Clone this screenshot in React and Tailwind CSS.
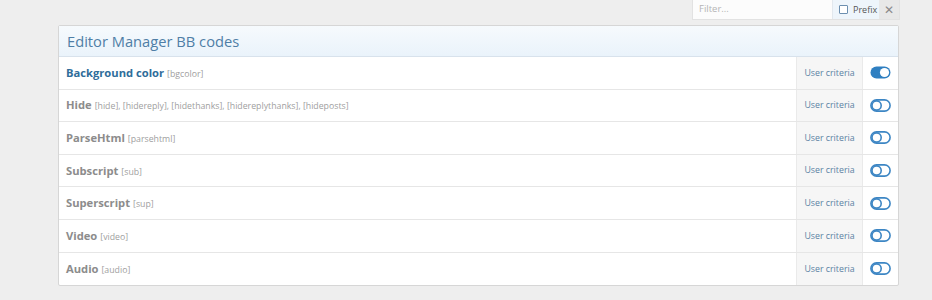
import React from "react";

const rows = [
  { name: "Background color", tags: "[bgcolor]", on: true },
  { name: "Hide", tags: "[hide], [hidereply], [hidethanks], [hidereplythanks], [hideposts]", on: false },
  { name: "ParseHtml", tags: "[parsehtml]", on: false },
  { name: "Subscript", tags: "[sub]", on: false },
  { name: "Superscript", tags: "[sup]", on: false },
  { name: "Video", tags: "[video]", on: false },
  { name: "Audio", tags: "[audio]", on: false },
];

function Toggle({ on }) {
  if (on) {
    return (
      <svg width="21" height="13" viewBox="0 0 21 13">
        <rect x="0.5" y="0.5" width="20" height="12" rx="6" fill="#2f7fc1" />
        <circle cx="14.5" cy="6.5" r="4.6" fill="#ffffff" />
      </svg>
    );
  }
  return (
    <svg width="21" height="13" viewBox="0 0 21 13">
      <rect x="0.9" y="0.9" width="19.2" height="11.2" rx="5.6" fill="#ffffff" stroke="#3d86c4" strokeWidth="1.6" />
      <circle cx="6.6" cy="6.5" r="4.6" fill="#ffffff" stroke="#3d86c4" strokeWidth="1.6" />
    </svg>
  );
}

export default function App() {
  return (
    <div
      className="w-[932px] h-[300px] bg-[#eeeeee] overflow-hidden"
      style={{ fontFamily: '"Open Sans", "Noto Sans", sans-serif' }}
    >
      <div className="flex justify-end pr-[32px] h-[25px]">
        <div className="flex h-[20px] border border-[#e2e2e2] border-t-0 bg-white">
          <div className="w-[139px] flex items-center pl-[6px] text-[9.5px] text-[#b5b5b5] bg-[#fcfcfc]">
            Filter...
          </div>
          <div className="w-[47px] flex items-center gap-[5px] pl-[6px] bg-[#eef5fb] border-l border-[#e2e8ee] text-[9px] text-[#555]">
            <span className="w-[9px] h-[9px] border border-[#6c8fb0] bg-white rounded-[1px] shrink-0"></span>
            Prefix
          </div>
          <div className="w-[20px] flex items-center justify-center bg-[#e8e8e8] text-[#8a8a8a] text-[12px] leading-none">
            ✕
          </div>
        </div>
      </div>
      <div className="ml-[58px] w-[841px] bg-white border border-[#d6d6d6] rounded-[2px]">
        <div className="h-[31px] flex items-center pl-[8px] bg-gradient-to-b from-[#f6fafd] to-[#eaf3fb] border-b border-[#d8e2ec] text-[14.7px] text-[#4f7ea6]">
          Editor Manager BB codes
        </div>
        {rows.map((r, i) => (
          <div
            key={r.name}
            className={
              "h-[32.6px] flex items-stretch " +
              (i < rows.length - 1 ? "border-b border-[#e6e6e6]" : "")
            }
          >
            <div className="flex-1 flex items-center pl-[7px] pt-[1px]">
              <div className="flex items-baseline gap-[3px]">
                <span
                  className={
                    "text-[11.2px] font-bold " +
                    (r.on ? "text-[#2f6d9a]" : "text-[#8c8c8c]")
                  }
                >
                  {r.name}
                </span>
                <span className="text-[8.75px] text-[#a0a0a0]">{r.tags}</span>
              </div>
            </div>
            <div className="w-[66px] flex items-center justify-center pt-[1px] bg-[#f6f6f6] border-l border-[#eaeaea] text-[8.8px] text-[#5b82a3]">
              User criteria
            </div>
            <div className="w-[36px] flex items-center justify-center border-l border-[#eaeaea]">
              <Toggle on={r.on} />
            </div>
          </div>
        ))}
      </div>
    </div>
  );
}
